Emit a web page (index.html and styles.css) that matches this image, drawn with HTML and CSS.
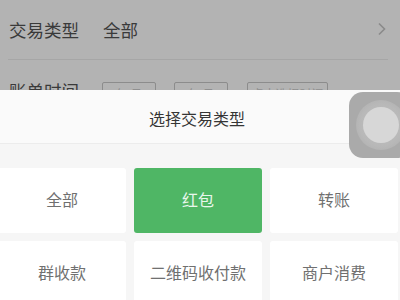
FILE: index.html
```html
<!DOCTYPE html>
<html lang="zh">
<head>
<meta charset="utf-8">
<link rel="stylesheet" href="styles.css">
</head>
<body>
<div class="page">
  <div class="row row-type">
    <span class="label">交易类型</span>
    <span class="value">全部</span>
    <svg class="chev" width="10" height="14" viewBox="0 0 10 14"><path d="M2 1.5 L7.5 7 L2 12.5" fill="none" stroke="#8a8a8a" stroke-width="1.6"/></svg>
  </div>
  <div class="row row-time">
    <span class="label">账单时间</span>
    <span class="box b1">年 月</span>
    <span class="box b2">年 月</span>
    <span class="box b3">点击选择时间</span>
  </div>

  <div class="sheet">
    <div class="sheet-head">选择交易类型</div>
    <div class="grid">
      <div class="cell">全部</div>
      <div class="cell active">红包</div>
      <div class="cell">转账</div>
      <div class="cell">群收款</div>
      <div class="cell">二维码收付款</div>
      <div class="cell">商户消费</div>
    </div>
  </div>

  <div class="assist"><div class="assist-ring"><div class="assist-dot"></div></div></div>
</div>
</body>
</html>
```
FILE: styles.css
```css
html, body {
  margin: 0;
  padding: 0;
}
body {
  width: 400px;
  height: 300px;
  overflow: hidden;
  font-family: "Noto Sans CJK SC", "Noto Sans", sans-serif;
}
.page {
  position: relative;
  width: 400px;
  height: 300px;
  background: #b3b3b3;
  overflow: hidden;
}
.row {
  display: flex;
  align-items: center;
  color: #3a3a3a;
  font-size: 17.5px;
}
.row-type {
  height: 59px;
  margin: 0 12px 0 8px;
  padding-left: 1px;
  border-bottom: 1px solid #a6a6a6;
}
.row-type .value {
  margin-left: 24px;
}
.chev {
  margin-left: auto;
  margin-right: 1px;
  margin-top: -2px;
}
.row-time {
  padding-left: 9px;
  padding-top: 22px;
  height: 30px;
  align-items: flex-start;
}
.row-time .label {
  margin-top: -4px;
}
.box {
  box-sizing: border-box;
  height: 26px;
  border: 1px solid #8c8c8c;
  border-radius: 2px;
  font-size: 12px;
  color: #8f8f8f;
  display: flex;
  align-items: flex-start;
  justify-content: center;
  padding-top: 2px;
}
.b1 { width: 54px; margin-left: 23px; }
.b2 { width: 54px; margin-left: 18px; }
.b3 { width: 81px; margin-left: 19px; }

.sheet {
  position: absolute;
  left: 0;
  right: 0;
  top: 90px;
  bottom: 0;
  background: #f6f6f6;
}
.sheet-head {
  height: 54px;
  box-sizing: border-box;
  background: #fafafa;
  border-bottom: 1px solid #ececec;
  display: flex;
  align-items: center;
  justify-content: center;
  font-size: 16px;
  color: #353535;
  padding-right: 6px;
  padding-top: 2px;
}
.grid {
  display: grid;
  grid-template-columns: repeat(3, 128px);
  grid-auto-rows: 65px;
  column-gap: 8px;
  row-gap: 8px;
  margin-left: -2px;
  padding-top: 24px;
}
.cell {
  background: #ffffff;
  border-radius: 3px;
  display: flex;
  align-items: center;
  justify-content: center;
  font-size: 16px;
  color: #707070;
  padding-bottom: 3px;
  box-sizing: border-box;
}
.cell.active {
  background: #4fb665;
  color: #e9f6ec;
}

.assist {
  position: absolute;
  left: 349px;
  top: 92px;
  width: 62px;
  height: 66px;
  border-radius: 14px;
  background: #aaaaaa;
  display: flex;
  align-items: center;
  padding-left: 7px;
  box-sizing: border-box;
}
.assist-ring {
  width: 50px;
  height: 50px;
  border-radius: 50%;
  background: radial-gradient(circle, #c2c2c2 0%, #b8b8b8 60%, #aaaaaa 100%);
  display: flex;
  align-items: center;
  justify-content: center;
}
.assist-dot {
  width: 36px;
  height: 36px;
  border-radius: 50%;
  background: #d7d7d7;
}
```
